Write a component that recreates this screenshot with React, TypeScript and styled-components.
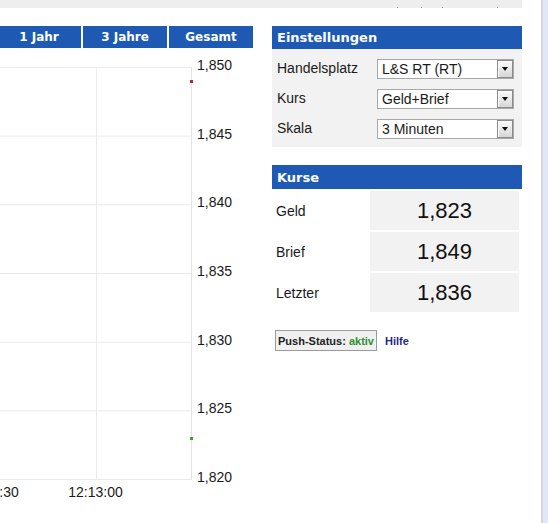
import React from 'react';
import styled, { createGlobalStyle } from 'styled-components';

const GlobalStyle = createGlobalStyle`
  html, body {
    margin: 0;
    padding: 0;
    background: #ffffff;
  }
  body {
    font-family: "Liberation Sans", Arial, sans-serif;
    color: #1a1a1a;
    overflow: hidden;
  }
`;

const Page = styled.div`
  display: flex;
  height: 523px;
  width: 548px;
`;

const Content = styled.div`
  width: 541px;
  display: flex;
  flex-direction: column;
`;

const Edge = styled.div`
  flex: 1;
  border-left: 2px solid #d6d6d6;
  background: #dfe7f8;
`;

const TopStrip = styled.div`
  width: 522px;
  height: 8px;
  background: #eeeeee;
  display: flex;
  align-items: flex-end;
  padding-left: 397px;
  box-sizing: border-box;
`;

const Tick = styled.span<{ $gap: number; $color: string }>`
  flex: 0 0 1px;
  height: 1px;
  margin-left: ${(p) => p.$gap}px;
  background: ${(p) => p.$color};
`;

const Main = styled.div`
  display: flex;
  margin-top: 18px;
`;

const ChartColumn = styled.div`
  width: 270px;
  display: flex;
  flex-direction: column;
`;

const Tabs = styled.div`
  width: 253px;
  height: 22px;
  display: flex;
  justify-content: flex-end;
  gap: 2px;
  overflow: hidden;
`;

const Tab = styled.div`
  flex: 0 0 84px;
  height: 22px;
  background: #1e5ab4;
  color: #ffffff;
  font-family: "DejaVu Sans", Verdana, sans-serif;
  font-weight: bold;
  font-size: 12px;
  display: flex;
  align-items: center;
  justify-content: center;
`;

const ChartSvg = styled.svg`
  display: block;
  width: 270px;
  height: 475px;
`;

const Sidebar = styled.div`
  width: 250px;
  margin-left: 2px;
  display: flex;
  flex-direction: column;
`;

const BoxHeader = styled.div<{ $height: number; $gapTop?: number }>`
  height: ${(p) => p.$height}px;
  margin-top: ${(p) => p.$gapTop ?? 0}px;
  background: #1e5ab4;
  color: #ffffff;
  font-family: "DejaVu Sans", Verdana, sans-serif;
  font-weight: bold;
  font-size: 13px;
  display: flex;
  align-items: center;
  padding-left: 5px;
`;

const SettingsPanel = styled.div`
  background: #f2f2f2;
  padding: 10px 0 8px 5px;
  display: grid;
  grid-template-columns: 100px 137px;
  row-gap: 10px;
`;

const SettingLabel = styled.div`
  font-size: 14px;
  height: 20px;
  display: flex;
  align-items: center;
  padding-bottom: 3px;
  box-sizing: border-box;
`;

const SelectBox = styled.div`
  height: 20px;
  box-sizing: border-box;
  border: 1px solid #a8a8a8;
  background: #ffffff;
  display: flex;
  align-items: stretch;
`;

const SelectValue = styled.div`
  flex: 1;
  font-size: 14px;
  padding-left: 4px;
  display: flex;
  align-items: center;
  white-space: nowrap;
`;

const SelectArrow = styled.div`
  width: 16px;
  box-sizing: border-box;
  border: 1px solid #8c8c8c;
  box-shadow: inset 1px 1px 0 #ffffff;
  background: linear-gradient(#fbfbfb, #d6d6d6);
  display: flex;
  align-items: center;
  justify-content: center;
  &::after {
    content: '';
    border-left: 3.5px solid transparent;
    border-right: 3.5px solid transparent;
    border-top: 4px solid #111111;
  }
`;

const QuoteTable = styled.div`
  margin-top: 2px;
  display: grid;
  grid-template-columns: 98px 149px;
  grid-auto-rows: 39px;
  row-gap: 2px;
`;

const QuoteLabel = styled.div`
  font-size: 14px;
  padding-left: 4px;
  display: flex;
  align-items: center;
`;

const QuoteValue = styled.div`
  background: #f2f2f2;
  font-size: 22px;
  color: #111111;
  display: flex;
  align-items: center;
  justify-content: center;
`;

const PushRow = styled.div`
  margin-top: 18px;
  padding-left: 3px;
  display: flex;
  align-items: center;
  gap: 8px;
  font-size: 11px;
  font-weight: bold;
`;

const PushButton = styled.div`
  height: 21px;
  box-sizing: border-box;
  border: 1px solid #9a9a9a;
  background: #f0f0f0;
  padding: 0 2px;
  display: flex;
  align-items: center;
  color: #222222;
`;

const Active = styled.span`
  color: #2f8f2f;
`;

const HelpLink = styled.a`
  color: #1f2a86;
  text-decoration: none;
`;

const settings = [
  { label: 'Handelsplatz', value: 'L&S RT (RT)' },
  { label: 'Kurs', value: 'Geld+Brief' },
  { label: 'Skala', value: '3 Minuten' },
];

const quotes = [
  { label: 'Geld', value: '1,823' },
  { label: 'Brief', value: '1,849' },
  { label: 'Letzter', value: '1,836' },
];

const PLOT_TOP = 19;
const STEP = 68.67;
const PLOT_RIGHT = 192;
const yLabels = ['1,850', '1,845', '1,840', '1,835', '1,830', '1,825', '1,820'];
const xTicks = [
  { x: -8, label: '12:12:30' },
  { x: 96, label: '12:13:00' },
];

const Chart: React.FC = () => {
  const bottom = PLOT_TOP + STEP * 6;
  return (
    <ChartSvg viewBox="0 0 270 475">
      {yLabels.map((_, i) => (
        <line
          key={`h${i}`}
          x1={0}
          x2={PLOT_RIGHT}
          y1={PLOT_TOP + i * STEP + 0.5}
          y2={PLOT_TOP + i * STEP + 0.5}
          stroke="#ebebeb"
        />
      ))}
      {xTicks.map((t) => (
        <line key={t.label} x1={t.x + 0.5} x2={t.x + 0.5} y1={PLOT_TOP} y2={bottom} stroke="#ebebeb" />
      ))}
      <line x1={PLOT_RIGHT - 0.5} x2={PLOT_RIGHT - 0.5} y1={PLOT_TOP} y2={bottom + 1} stroke="#e3e3e3" />
      <rect x={PLOT_RIGHT - 2} y={32} width={3} height={3} fill="#a53030" />
      <rect x={PLOT_RIGHT - 2} y={389} width={3} height={3} fill="#35a535" />
      {yLabels.map((label, i) => (
        <text
          key={label}
          x={197}
          y={PLOT_TOP + i * STEP + 3}
          fontFamily='"Liberation Sans", Arial, sans-serif'
          fontSize={14}
          fill="#1a1a1a"
        >
          {label}
        </text>
      ))}
      {xTicks.map((t) => (
        <text
          key={`l${t.label}`}
          x={t.x - 0.5}
          y={449}
          textAnchor="middle"
          fontFamily='"Liberation Sans", Arial, sans-serif'
          fontSize={14}
          fill="#1a1a1a"
        >
          {t.label}
        </text>
      ))}
    </ChartSvg>
  );
};

const App: React.FC = () => {
  return (
    <>
      <GlobalStyle />
      <Page>
        <Content>
          <TopStrip>
            <Tick $gap={0} $color="#9a6fc0" />
            <Tick $gap={23} $color="#b07ab0" />
            <Tick $gap={20} $color="#8a6fd0" />
            <Tick $gap={54} $color="#6f9ad8" />
          </TopStrip>
          <Main>
            <ChartColumn>
              <Tabs>
                <Tab>1 Jahr</Tab>
                <Tab>3 Jahre</Tab>
                <Tab>Gesamt</Tab>
              </Tabs>
              <Chart />
            </ChartColumn>
            <Sidebar>
              <BoxHeader $height={23}>Einstellungen</BoxHeader>
              <SettingsPanel>
                {settings.map((s) => (
                  <React.Fragment key={s.label}>
                    <SettingLabel>{s.label}</SettingLabel>
                    <SelectBox>
                      <SelectValue>{s.value}</SelectValue>
                      <SelectArrow />
                    </SelectBox>
                  </React.Fragment>
                ))}
              </SettingsPanel>
              <BoxHeader $height={24} $gapTop={18}>
                Kurse
              </BoxHeader>
              <QuoteTable>
                {quotes.map((q) => (
                  <React.Fragment key={q.label}>
                    <QuoteLabel>{q.label}</QuoteLabel>
                    <QuoteValue>{q.value}</QuoteValue>
                  </React.Fragment>
                ))}
              </QuoteTable>
              <PushRow>
                <PushButton>
                  Push-Status:&nbsp;<Active>aktiv</Active>
                </PushButton>
                <HelpLink href="#">Hilfe</HelpLink>
              </PushRow>
            </Sidebar>
          </Main>
        </Content>
        <Edge />
      </Page>
    </>
  );
};

export default App;
